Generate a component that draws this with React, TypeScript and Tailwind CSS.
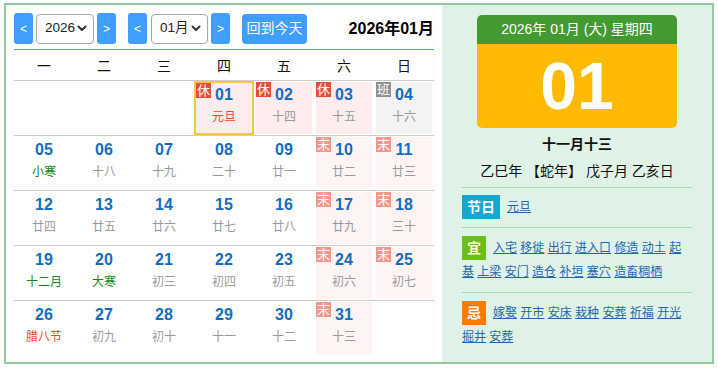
import React from "react";

type Cell = {
  d?: string;
  l?: string;
  lc?: "gray" | "green" | "red";
  tag?: "休" | "班" | "末";
  today?: boolean;
};

const rows: Cell[][] = [
  [{}, {}, {}, { d: "01", l: "元旦", lc: "red", tag: "休", today: true }, { d: "02", l: "十四", tag: "休" }, { d: "03", l: "十五", tag: "休" }, { d: "04", l: "十六", tag: "班" }],
  [{ d: "05", l: "小寒", lc: "green" }, { d: "06", l: "十八" }, { d: "07", l: "十九" }, { d: "08", l: "二十" }, { d: "09", l: "廿一" }, { d: "10", l: "廿二", tag: "末" }, { d: "11", l: "廿三", tag: "末" }],
  [{ d: "12", l: "廿四" }, { d: "13", l: "廿五" }, { d: "14", l: "廿六" }, { d: "15", l: "廿七" }, { d: "16", l: "廿八" }, { d: "17", l: "廿九", tag: "末" }, { d: "18", l: "三十", tag: "末" }],
  [{ d: "19", l: "十二月", lc: "green" }, { d: "20", l: "大寒", lc: "green" }, { d: "21", l: "初三" }, { d: "22", l: "初四" }, { d: "23", l: "初五" }, { d: "24", l: "初六", tag: "末" }, { d: "25", l: "初七", tag: "末" }],
  [{ d: "26", l: "腊八节", lc: "red" }, { d: "27", l: "初九" }, { d: "28", l: "初十" }, { d: "29", l: "十一" }, { d: "30", l: "十二" }, { d: "31", l: "十三", tag: "末" }, {}],
];

const weekdays = ["一", "二", "三", "四", "五", "六", "日"];

function Chevron() {
  return (
    <svg width="10" height="7" viewBox="0 0 10 7" className="shrink-0">
      <polyline points="1.5,1.5 5,5 8.5,1.5" fill="none" stroke="#333" strokeWidth="2" strokeLinecap="round" strokeLinejoin="round" />
    </svg>
  );
}

function NavBtn({ children, className = "" }: { children: React.ReactNode; className?: string }) {
  return (
    <div className={`w-[19px] h-[31px] rounded-[3px] bg-[#409eff] text-white text-[12px] flex items-center justify-center ${className}`}>
      {children}
    </div>
  );
}

function FakeSelect({ value, w, className = "" }: { value: string; w: string; className?: string }) {
  return (
    <div className={`${w} h-[30px] rounded-[4px] border border-[#a6a6a6] bg-white flex items-center pl-[8px] pr-[6px] text-[13.5px] text-[#222] ${className}`}>
      <span>{value}</span>
      <span className="ml-auto flex"><Chevron /></span>
    </div>
  );
}

function DayCell({ c }: { c: Cell }) {
  if (!c.d) return <div />;
  let bg = "";
  if (c.tag === "休") bg = "bg-[#fdeded]";
  else if (c.tag === "班") bg = "bg-[#f3f3f3]";
  else if (c.tag === "末") bg = "bg-[#fff3f3]";
  const badge =
    c.tag === "休" ? "bg-[#e74c3c]" : c.tag === "班" ? "bg-[#8f8f8f]" : "bg-[#f3968c]";
  const lunarColor =
    c.lc === "green" ? "text-[#138a13]" : c.lc === "red" ? "text-[#f4471c]" : "text-[#9a9a9a]";
  return (
    <div className={c.today ? "" : "px-[2px] py-[1px]"}>
      <div
        className={`relative h-full flex flex-col items-center ${bg} ${
          c.today ? "border-2 border-[#fbc640] pt-[2px]" : "pt-[3px]"
        }`}
      >
        {c.tag && (
          <div className={`absolute left-0 top-0 w-[15px] h-[15px] ${badge} text-white text-[13px] leading-[15px] text-center`}>
            {c.tag}
          </div>
        )}
        <div className="text-[16px] leading-[20px] font-bold text-[#136dbe]">{c.d}</div>
        <div className={`mt-[4px] text-[12px] leading-[16px] ${lunarColor}`}>{c.l}</div>
      </div>
    </div>
  );
}

function Links({ items }: { items: string[] }) {
  return (
    <>
      {items.map((t, i) => (
        <React.Fragment key={i}>
          {i > 0 && " "}
          <a className="underline text-[#1f66b3] cursor-pointer">{t}</a>
        </React.Fragment>
      ))}
    </>
  );
}

export default function App() {
  return (
    <div className="pt-[3px] pl-[4px] font-['Liberation_Sans','Noto_Sans_CJK_SC',sans-serif] text-[#222]">
      <div className="w-[710px] h-[361px] border-2 border-[#93c9a1] flex">
        {/* Left panel */}
        <div className="w-[436px] bg-white px-[8px] pt-[8px]">
          <div className="flex items-center h-[31px]">
            <NavBtn>&lt;</NavBtn>
            <FakeSelect value="2026" w="w-[58px]" className="ml-[3px]" />
            <NavBtn className="ml-[3px]">&gt;</NavBtn>
            <NavBtn className="ml-[12px]">&lt;</NavBtn>
            <FakeSelect value="01月" w="w-[57px]" className="ml-[4px]" />
            <NavBtn className="ml-[3px]">&gt;</NavBtn>
            <div className="ml-[12px] h-[30px] w-[65px] rounded-[4px] bg-[#409eff] text-white text-[14px] flex items-center justify-center">
              回到今天
            </div>
            <div className="ml-auto text-[16px] font-bold text-black">2026年01月</div>
          </div>
          <div className="mt-[5px] h-px bg-[#5d9fdc]" />
          <div className="grid grid-cols-7 h-[30px]">
            {weekdays.map((w) => (
              <div key={w} className="flex items-center justify-center pt-[3px] text-[14px] text-[#111]">
                {w}
              </div>
            ))}
          </div>
          {rows.map((r, i) => (
            <div key={i} className="grid grid-cols-7 h-[55px] border-t border-[#cccccc]">
              {r.map((c, j) => (
                <DayCell key={j} c={c} />
              ))}
            </div>
          ))}
        </div>

        {/* Right panel */}
        <div className="w-[270px] bg-[#dff2e6] px-[20px] pt-[10px]">
          <div className="w-[200px] mx-auto rounded-[5px] overflow-hidden">
            <div className="h-[29px] bg-[#429a30] text-white text-[14px] flex items-center justify-center">
              2026年 01月 (大) 星期四
            </div>
            <div className="h-[84px] bg-[#ffba00] text-white font-bold text-[66px] leading-none flex items-center justify-center">
              01
            </div>
          </div>
          <div className="mt-[6px] text-center text-[14px] leading-[20px] font-bold text-[#111]">十一月十三</div>
          <div className="mt-[7px] text-center text-[14px] leading-[20px] text-[#111]">乙巳年 【蛇年】 戊子月 乙亥日</div>
          <div className="mt-[6px] h-px bg-[#a9d9b7]" />
          <div className="mt-[7px] flex items-center">
            <div className="w-[38px] h-[24px] bg-[#16a6d4] text-white font-bold text-[14px] flex items-center justify-center">
              节日
            </div>
            <a className="ml-[7px] text-[12px] underline text-[#1f66b3]">元旦</a>
          </div>
          <div className="mt-[8px] h-px bg-[#a9d9b7]" />
          <div className="mt-[8px] text-[12px] leading-[24px]">
            <span className="inline-block align-top w-[24px] h-[24px] mr-[7px] bg-[#6cbf1b] text-[#fffbd2] font-bold text-[14px] text-center leading-[24px]">
              宜
            </span>
            <Links items={["入宅", "移徙", "出行", "进入口", "修造", "动土", "起基", "上梁", "安门", "造仓", "补垣", "塞穴", "造畜稠栖"]} />
          </div>
          <div className="mt-[8px] h-px bg-[#a9d9b7]" />
          <div className="mt-[8px] text-[12px] leading-[24px]">
            <span className="inline-block align-top w-[24px] h-[24px] mr-[7px] bg-[#ff7b00] text-white font-bold text-[14px] text-center leading-[24px]">
              忌
            </span>
            <Links items={["嫁娶", "开市", "安床", "栽种", "安葬", "祈福", "开光", "掘井", "安葬"]} />
          </div>
        </div>
      </div>
    </div>
  );
}
